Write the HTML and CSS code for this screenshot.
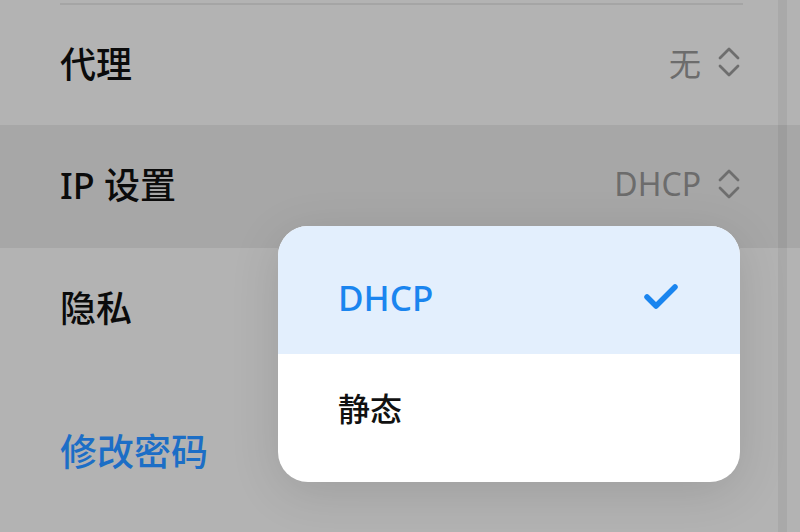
FILE: index.html
```html
<!DOCTYPE html>
<html lang="zh-CN">

<head>
    <meta charset="UTF-8">
    <meta name="viewport" content="width=device-width, initial-scale=1.0">
    <title>网络设置</title>
    <link rel="stylesheet" href="styles.css">
</head>

<body>
    <div class="screen">
        <div class="divider"></div>

        <div class="row first">
            <span class="label">代理</span>
            <span class="value">无
                <svg class="updown" viewBox="0 0 22 32" width="22" height="32">
                    <path d="M2 12 L11 3 L20 12 M2 20 L11 29 L20 20" />
                </svg>
            </span>
        </div>

        <div class="row active">
            <span class="label">IP 设置</span>
            <span class="value">DHCP
                <svg class="updown" viewBox="0 0 22 32" width="22" height="32">
                    <path d="M2 12 L11 3 L20 12 M2 20 L11 29 L20 20" />
                </svg>
            </span>
        </div>

        <div class="row">
            <span class="label">隐私</span>
        </div>

        <div class="row link-row">
            <span class="link">修改密码</span>
        </div>

        <!-- scroll edge of the settings panel -->
        <div class="edge"></div>

        <!-- dropdown for IP 设置 -->
        <ul class="menu">
            <li class="selected">
                <span>DHCP</span>
                <svg class="check" viewBox="0 0 34 28" width="34" height="28">
                    <path d="M3 14 L12 23 L31 4" />
                </svg>
            </li>
            <li class="plain"><span>静态</span></li>
        </ul>
    </div>
</body>

</html>
```

FILE: styles.css
```css
* {
    box-sizing: border-box;
    margin: 0;
    padding: 0;
}

html,
body {
    height: 100%;
}

body {
    background-color: #b3b3b3;
    font-family: "Noto Sans", "Noto Sans CJK SC", sans-serif;
    overflow: hidden;
}

.screen {
    position: relative;
    height: 532px;
    padding-top: 3px;
}

.divider {
    height: 2px;
    margin: 0 57px 0 60px;
    background-color: #a5a5a5;
}

.row {
    display: flex;
    align-items: center;
    justify-content: space-between;
    height: 123px;
    padding: 0 60px 6px 60px;
}

.row.first {
    height: 120px;
}

.row.active {
    background-color: #a7a7a7;
}

.row.link-row {
    height: 158px;
    padding-bottom: 0;
}

.label {
    font-size: 36px;
    font-weight: 500;
    color: #0b0b0b;
}

.value {
    display: flex;
    align-items: center;
    gap: 17px;
    font-size: 32px;
    color: #6c6c6c;
}

.updown {
    fill: none;
    stroke: #6e6e6e;
    stroke-width: 2.8;
    stroke-linecap: round;
    stroke-linejoin: round;
}

.link {
    font-size: 37px;
    font-weight: 500;
    color: #1c6ec6;
}

.edge {
    position: absolute;
    top: 0;
    bottom: 0;
    left: 778px;
    width: 9px;
    background-color: rgba(0, 0, 0, 0.055);
}

.menu {
    position: absolute;
    left: 278px;
    top: 226px;
    width: 462px;
    list-style: none;
    background-color: #ffffff;
    border-radius: 30px;
    overflow: hidden;
    box-shadow: 0 10px 50px rgba(0, 0, 0, 0.12);
}

.menu li {
    display: flex;
    align-items: center;
    justify-content: space-between;
    height: 128px;
    padding: 0 62px 0 60px;
    font-size: 32px;
    font-weight: 500;
    color: #111111;
}

.menu li.selected {
    padding-top: 14px;
    background-color: #e3effd;
    color: #1a85ef;
    font-size: 35px;
}

.menu li.plain {
    padding-bottom: 22px;
}

.check {
    fill: none;
    stroke: #1a85ef;
    stroke-width: 5.5;
    stroke-linecap: round;
    stroke-linejoin: round;
}
```
